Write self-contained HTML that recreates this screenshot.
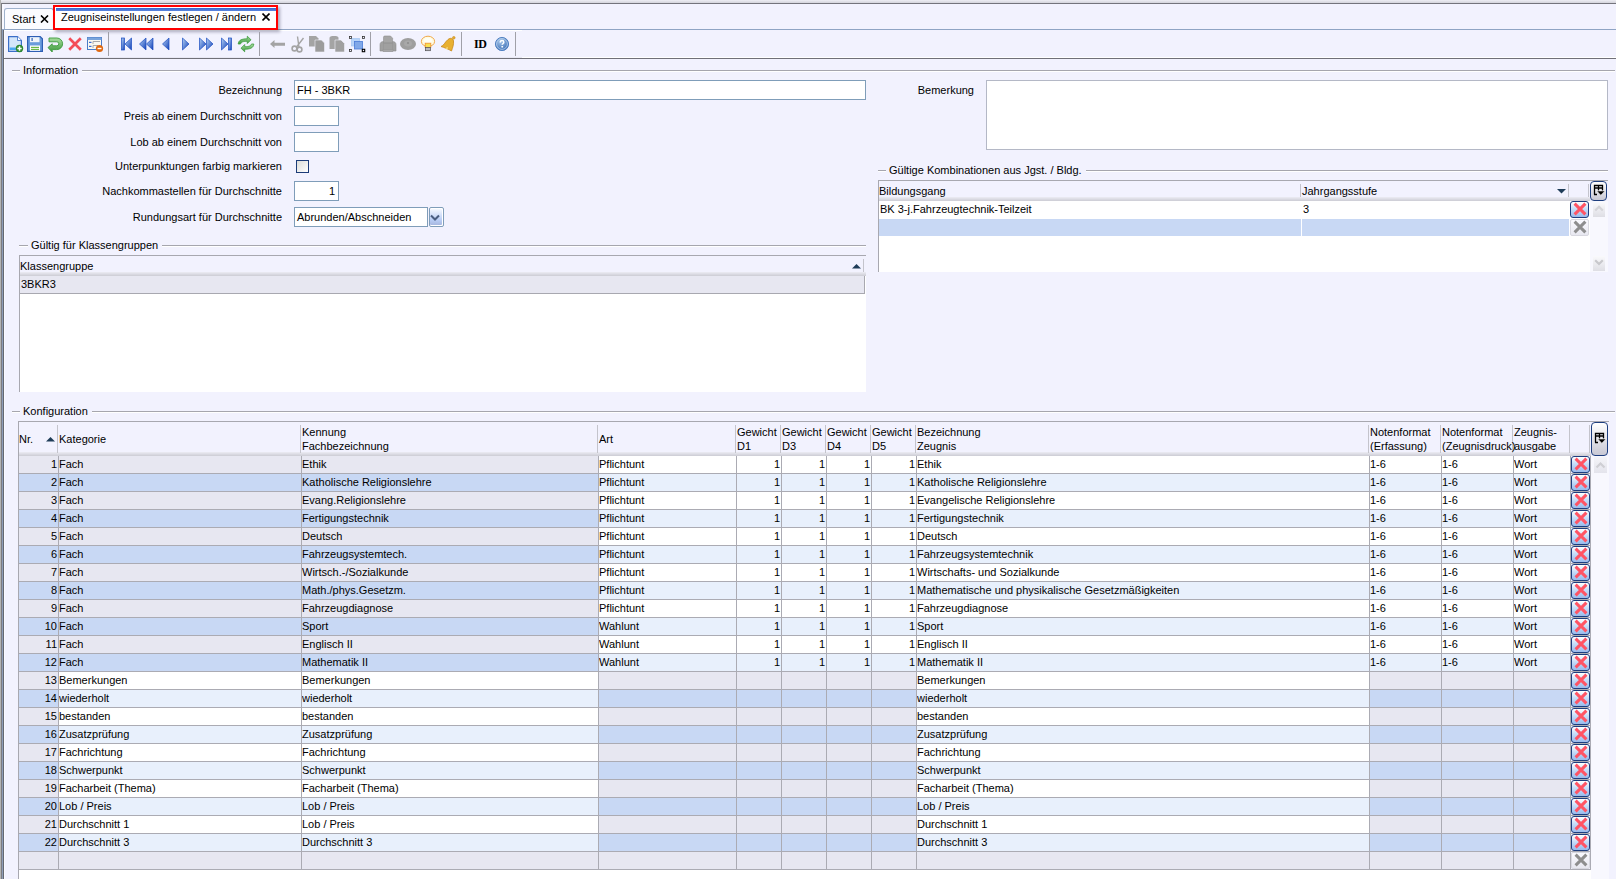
<!DOCTYPE html>
<html><head><meta charset="utf-8"><style>
html,body{margin:0;padding:0;}
body{width:1616px;height:879px;overflow:hidden;position:relative;background:#F2F2FE;font-family:"Liberation Sans", sans-serif;font-size:11px;color:#000;}
body>div{position:absolute;}
.t{white-space:pre;line-height:13px;font-size:11px;}
</style></head><body>
<div style="left:0px;top:0px;width:1616px;height:3px;background:linear-gradient(#EEEEF4,#D4D4DC)"></div><div style="left:1px;top:3px;width:1615px;height:1px;background:#74747C"></div><div style="left:0px;top:0px;width:1px;height:879px;background:#B4B4B4"></div><div style="left:1px;top:3px;width:1px;height:876px;background:#7C7C80"></div><div style="left:2px;top:30px;width:1px;height:849px;background:#8C9CB8"></div><div style="left:3px;top:30px;width:1px;height:849px;background:#646870"></div><div style="left:4px;top:30px;width:1px;height:849px;background:#FAFAFF"></div><div style="left:2px;top:4px;width:2px;height:26px;background:#F8F8FF"></div><div style="left:5px;top:30px;width:1611px;height:28px;background:#F2F2FE"></div><div style="left:5px;top:30px;width:517px;height:1px;background:#FFFFFF"></div><div style="left:522px;top:57px;width:1094px;height:1px;background:#FFFFFF"></div><div style="left:5px;top:57px;width:517px;height:1px;background:#E8E8F4"></div><div style="left:2px;top:29px;width:1614px;height:1px;background:#8FA4C4"></div><div style="left:4px;top:8px;width:50px;height:21px;background:#FBFBFF;border:1px solid #A0B2CC;border-bottom:none;border-radius:3px 3px 0 0;box-sizing:border-box"></div><div class="t" style="left:12px;top:13px;">Start</div><svg style="position:absolute;left:40px;top:15px" width="9" height="8" viewBox="0 0 9 8"><path d="M1 0.5L8 7.5M8 0.5L1 7.5" stroke="#000" stroke-width="1.6"/></svg><div style="left:53px;top:5px;width:225px;height:25px;background:transparent;box-shadow:2px 2px 3px rgba(0,0,40,0.30)"></div><div style="left:55px;top:7px;width:221px;height:21px;background:#FFFFFF"></div><div style="left:56px;top:8px;width:220px;height:3px;background:linear-gradient(#3A64C8,#5A86E0)"></div><div class="t" style="left:61px;top:11px;">Zeugniseinstellungen festlegen / ändern</div><svg style="position:absolute;left:262px;top:13px" width="8" height="8" viewBox="0 0 8 8"><path d="M0.5 0.5L7.5 7.5M7.5 0.5L0.5 7.5" stroke="#000" stroke-width="1.6"/></svg><div style="left:53px;top:5px;width:225px;height:25px;border:2px solid #FF0000;box-sizing:border-box"></div><div style="left:4px;top:58px;width:1612px;height:1px;background:#707078"></div><div style="left:108px;top:32px;width:1px;height:24px;background:#A0A0A8"></div><div style="left:259px;top:32px;width:1px;height:24px;background:#A0A0A8"></div><div style="left:370px;top:32px;width:1px;height:24px;background:#A0A0A8"></div><div style="left:461px;top:32px;width:1px;height:24px;background:#A0A0A8"></div><div style="left:515px;top:32px;width:1px;height:24px;background:#A0A0A8"></div><svg width="0" height="0" style="position:absolute"><defs>
<linearGradient id="gBlue" x1="0" y1="0" x2="0" y2="1"><stop offset="0" stop-color="#A8CCF4"/><stop offset="1" stop-color="#1E50C0"/></linearGradient>
<linearGradient id="gNav" x1="0" y1="0" x2="1" y2="1"><stop offset="0" stop-color="#B4D2F4"/><stop offset="1" stop-color="#1240B8"/></linearGradient>
<linearGradient id="gGreen" x1="0" y1="0" x2="0" y2="1"><stop offset="0" stop-color="#A8DCA0"/><stop offset="1" stop-color="#3C9A3C"/></linearGradient>
<linearGradient id="gGray" x1="0" y1="0" x2="0" y2="1"><stop offset="0" stop-color="#B4B4B4"/><stop offset="1" stop-color="#8C8C8C"/></linearGradient>
<linearGradient id="gDel" x1="0" y1="0" x2="0" y2="1"><stop offset="0" stop-color="#F4F8FF"/><stop offset="1" stop-color="#9CBCEC"/></linearGradient>
<linearGradient id="gBtn" x1="0" y1="0" x2="0" y2="1"><stop offset="0" stop-color="#FFFFFF"/><stop offset="1" stop-color="#C8C8D4"/></linearGradient>
<radialGradient id="gBulb" cx="0.5" cy="0.4" r="0.6"><stop offset="0" stop-color="#FFFFF0"/><stop offset="0.6" stop-color="#FFF0A0"/><stop offset="1" stop-color="#F0A040"/></radialGradient>
<radialGradient id="gHelp" cx="0.4" cy="0.3" r="0.7"><stop offset="0" stop-color="#A8C8EC"/><stop offset="1" stop-color="#3C6EB4"/></radialGradient>
</defs></svg><svg style="position:absolute;left:7px;top:35px" width="18" height="18" viewBox="0 0 18 18"><path d="M1.6 1.6H10.5L14.4 5.5V16.4H1.6Z" fill="#D4E6FA" stroke="#3A6EC8" stroke-width="1.2"/><path d="M10.5 1.6V5.5H14.4" fill="#fff" stroke="#3A6EC8" stroke-width="0.8"/><rect x="2.6" y="12.5" width="7" height="2.5" fill="#4AA8F0"/><circle cx="12.5" cy="13.5" r="3.7" fill="#2E8A2E"/><path d="M12.5 11.3V15.7M10.3 13.5H14.7" stroke="#fff" stroke-width="1.5"/></svg><svg style="position:absolute;left:26px;top:35px" width="18" height="18" viewBox="0 0 18 18"><path d="M1.6 1.6H14.2L16.4 3.8V16.4H1.6Z" fill="#6A9CDC" stroke="#2E5EB4" stroke-width="1.2"/><rect x="4" y="2.2" width="9.5" height="5" fill="#F0F4FA"/><rect x="5.5" y="3" width="1.2" height="3" fill="#2E5EB4"/><rect x="4" y="10.5" width="10" height="5.3" fill="#FFFFFF"/><rect x="5" y="11.8" width="8" height="1.2" fill="#6AB84A"/><rect x="5" y="13.8" width="8" height="1.2" fill="#6AB84A"/></svg><svg style="position:absolute;left:44px;top:33px" width="22" height="22" viewBox="0 0 22 22"><path d="M5 5H12.8A5.8 5.8 0 0 1 12.8 16.6H8.2V19L4 14.6L8.2 10.8V12.8H12.8A2 2 0 0 0 12.8 8.8H5Z" fill="url(#gGreen)" stroke="#3C9A3C" stroke-width="0.9"/></svg><svg style="position:absolute;left:66px;top:35px" width="18" height="18" viewBox="0 0 18 18"><path d="M4.2 4.2L13.8 13.8M13.8 4.2L4.2 13.8" stroke="#F44C58" stroke-width="2.7" stroke-linecap="square"/></svg><svg style="position:absolute;left:86px;top:36px" width="18" height="18" viewBox="0 0 18 18"><rect x="1.5" y="1.5" width="14" height="12" fill="#FAF8F0" stroke="#4A7CC8" stroke-width="1"/><rect x="1.5" y="1.5" width="14" height="2.5" fill="#7AA4DC"/><rect x="3" y="5.8" width="2.5" height="1.2" fill="#3A6AD0"/><rect x="3" y="9.8" width="2.5" height="1.2" fill="#3A6AD0"/><path d="M7 8V5.5H14" fill="none" stroke="#A8A8A8" stroke-width="1"/><path d="M7 12V9.5H12" fill="none" stroke="#A8A8A8" stroke-width="1"/><circle cx="13.5" cy="12.5" r="3.6" fill="#E06810"/><rect x="11.5" y="11.8" width="4" height="1.4" fill="#fff"/></svg><svg style="position:absolute;left:120px;top:37px" width="13" height="15" viewBox="0 0 13 15"><rect x="1.5" y="1" width="3" height="12" fill="url(#gNav)" stroke="#1A4CC0" stroke-width="0.7"/><path d="M11.5 1V13L5 7Z" fill="url(#gNav)" stroke="#1A4CC0" stroke-width="0.7"/></svg><svg style="position:absolute;left:138px;top:37px" width="17" height="15" viewBox="0 0 17 15"><path d="M8 1V13L1.5 7Z" fill="url(#gNav)" stroke="#1A4CC0" stroke-width="0.7"/><path d="M15 1V13L8.5 7Z" fill="url(#gNav)" stroke="#1A4CC0" stroke-width="0.7"/></svg><svg style="position:absolute;left:161px;top:37px" width="10" height="15" viewBox="0 0 10 15"><path d="M8 1V13L1.5 7Z" fill="url(#gNav)" stroke="#1A4CC0" stroke-width="0.7"/></svg><svg style="position:absolute;left:181px;top:37px" width="10" height="15" viewBox="0 0 10 15"><path d="M1.5 1V13L8 7Z" fill="url(#gNav)" stroke="#1A4CC0" stroke-width="0.7"/></svg><svg style="position:absolute;left:198px;top:37px" width="17" height="15" viewBox="0 0 17 15"><path d="M1.5 1V13L8 7Z" fill="url(#gNav)" stroke="#1A4CC0" stroke-width="0.7"/><path d="M8.5 1V13L15 7Z" fill="url(#gNav)" stroke="#1A4CC0" stroke-width="0.7"/></svg><svg style="position:absolute;left:220px;top:37px" width="13" height="15" viewBox="0 0 13 15"><path d="M1.5 1V13L8 7Z" fill="url(#gNav)" stroke="#1A4CC0" stroke-width="0.7"/><rect x="8.5" y="1" width="3" height="12" fill="url(#gNav)" stroke="#1A4CC0" stroke-width="0.7"/></svg><svg style="position:absolute;left:234px;top:33px" width="22" height="22" viewBox="0 0 22 22"><path d="M4.2 11C4.5 7 8 5.8 13.3 5.8V3.2L17 6.8L13.3 10.5V8.3C9 8.3 7.3 9 6.5 11Z" fill="url(#gGreen)" stroke="#3C9A3C" stroke-width="0.8"/><path d="M19.8 11C19.5 15 16 16.2 10.7 16.2V18.8L7 15.2L10.7 11.5V13.7C15 13.7 16.7 13 17.5 11Z" fill="url(#gGreen)" stroke="#3C9A3C" stroke-width="0.8"/></svg><svg style="position:absolute;left:269px;top:38px" width="17" height="12" viewBox="0 0 17 12"><path d="M1 6L5.5 2V4.8H16V7.8H5.5V10Z" fill="#A4A4A4"/></svg><svg style="position:absolute;left:290px;top:35px" width="15" height="18" viewBox="0 0 15 18"><circle cx="4.5" cy="13.5" r="2.4" fill="none" stroke="#A4A4A4" stroke-width="1.6"/><circle cx="9.5" cy="14.5" r="2.4" fill="none" stroke="#A4A4A4" stroke-width="1.6"/><path d="M6.5 12L13.5 3M9 12.5L7.5 1.5" stroke="#A4A4A4" stroke-width="1.4"/></svg><svg style="position:absolute;left:308px;top:35px" width="18" height="18" viewBox="0 0 18 18"><path d="M1 1H8L10.5 3.5V11.5H1Z" fill="#A4A4A4"/><path d="M7 5H13.5L16.5 8V17H7Z" fill="#9C9C9C" stroke="#F1F1FC" stroke-width="0.6"/></svg><svg style="position:absolute;left:328px;top:35px" width="18" height="18" viewBox="0 0 18 18"><path d="M1.5 3C1.5 1.5 3 1 6 1S10.5 1.5 10.5 3V14H1.5Z" fill="#A4A4A4"/><path d="M7 5H13L16.5 8.5V17H7Z" fill="#A0A0A0" stroke="#F1F1FC" stroke-width="0.6"/></svg><svg style="position:absolute;left:348px;top:35px" width="18" height="18" viewBox="0 0 18 18"><rect x="3.5" y="3.5" width="8" height="7.5" fill="#B8D4F8" stroke="#9CC0F0" stroke-width="0.6"/><rect x="6.5" y="6.5" width="8" height="7.5" fill="#80A8E8" stroke="#4A7CD8" stroke-width="0.8"/><rect x="1.5" y="1.5" width="2" height="2" fill="none" stroke="#333" stroke-width="0.8"/><rect x="14.5" y="1.5" width="2" height="2" fill="none" stroke="#333" stroke-width="0.8"/><rect x="1.5" y="14.5" width="2" height="2" fill="none" stroke="#333" stroke-width="0.8"/><rect x="14.3" y="14.3" width="2.4" height="2.4" fill="none" stroke="#000" stroke-width="1.1"/></svg><svg style="position:absolute;left:379px;top:35px" width="18" height="18" viewBox="0 0 18 18"><path d="M1 16V9.5C1 7.5 2.5 6.5 4.5 6.5H13.5C15.5 6.5 17 7.5 17 9.5V16Z" fill="#A0A0A0" stroke="#8E8E8E" stroke-width="0.6"/><path d="M4.5 8V2.3C4.5 1.5 5 1 5.8 1H11.5L13.6 3.2V8Z" fill="#A6A6A6" stroke="#8E8E8E" stroke-width="0.6"/><path d="M4.5 8H13.5M4.5 8V16M13.5 8V16" stroke="#949494" stroke-width="0.6"/><rect x="4" y="14.3" width="10" height="2.4" fill="#A8A8A8" stroke="#909090" stroke-width="0.5"/></svg><svg style="position:absolute;left:399px;top:37px" width="18" height="14" viewBox="0 0 18 14"><ellipse cx="9" cy="7" rx="8" ry="6" fill="#9E9E9E"/><ellipse cx="9" cy="6.5" rx="4" ry="3" fill="#A8A8A8"/><circle cx="9" cy="6" r="0.8" fill="#777"/></svg><svg style="position:absolute;left:420px;top:35px" width="16" height="18" viewBox="0 0 16 18"><ellipse cx="8" cy="6.4" rx="6.6" ry="5.2" fill="#FFFBE0" stroke="#F0A848" stroke-width="1"/><ellipse cx="8" cy="5.5" rx="4" ry="2.5" fill="#FFFFF4"/><rect x="5.2" y="8.2" width="5.6" height="4.3" fill="#F8E050" stroke="#F09030" stroke-width="0.8"/><rect x="5.5" y="12.5" width="5" height="3.2" fill="#B8B8C0" stroke="#505050" stroke-width="0.7"/></svg><svg style="position:absolute;left:439px;top:35px" width="18" height="18" viewBox="0 0 18 18"><path d="M2 11.5C4.5 11 6 7 9 4.5C11.5 2.5 14 3 14.5 6C15 9 13.5 13 12.5 16C9.5 14 5 12.5 2 11.5Z" fill="#E8B030" stroke="#C88818" stroke-width="0.8"/><circle cx="14.8" cy="2.8" r="1.3" fill="#E8B030" stroke="#C88818" stroke-width="0.6"/><path d="M6 13L9 12L8.5 15Z" fill="#F8D870"/></svg><div class="t" style="left:474px;top:36px;font:bold 12px 'Liberation Serif',serif;line-height:16px;letter-spacing:-0.3px">ID</div><svg style="position:absolute;left:494px;top:36px" width="16" height="16" viewBox="0 0 16 16"><circle cx="8" cy="8" r="6.6" fill="url(#gHelp)" stroke="#4A7CC0" stroke-width="0.9"/><circle cx="8" cy="8" r="5.4" fill="none" stroke="#C8DCF4" stroke-width="0.7"/><path d="M6.3 6.5C6.3 5.2 7 4.6 8.1 4.6S9.8 5.2 9.8 6.3C9.8 7.4 8.2 7.6 8.2 8.8" fill="none" stroke="#fff" stroke-width="1.5"/><rect x="7.4" y="10" width="1.7" height="1.5" fill="#fff"/></svg><div style="left:12px;top:70px;width:1603px;height:1px;background:#A6A6AE"></div><div style="left:12px;top:71px;width:1603px;height:1px;background:#FFFFFF"></div><div class="t" style="left:20px;top:64px;padding:0 4px 0 3px;background:#F2F2FE">Information</div><div class="t" style="left:-118px;top:84px;width:400px;text-align:right;">Bezeichnung</div><div class="t" style="left:-118px;top:110px;width:400px;text-align:right;">Preis ab einem Durchschnitt von</div><div class="t" style="left:-118px;top:136px;width:400px;text-align:right;">Lob ab einem Durchschnitt von</div><div class="t" style="left:-118px;top:160px;width:400px;text-align:right;">Unterpunktungen farbig markieren</div><div class="t" style="left:-118px;top:185px;width:400px;text-align:right;">Nachkommastellen für Durchschnitte</div><div class="t" style="left:-118px;top:211px;width:400px;text-align:right;">Rundungsart für Durchschnitte</div><div style="left:294px;top:80px;width:572px;height:20px;background:#fff;border:1px solid #7F9DB9;box-sizing:border-box"></div><div class="t" style="left:297px;top:84px;">FH - 3BKR</div><div style="left:294px;top:106px;width:45px;height:20px;background:#fff;border:1px solid #7F9DB9;box-sizing:border-box"></div><div style="left:294px;top:132px;width:45px;height:20px;background:#fff;border:1px solid #7F9DB9;box-sizing:border-box"></div><div style="left:296px;top:160px;width:13px;height:13px;border:1px solid #1C3C78;box-sizing:border-box;background:linear-gradient(135deg,#DCDCD8,#FFFFFF)"></div><div style="left:294px;top:181px;width:45px;height:20px;background:#fff;border:1px solid #7F9DB9;box-sizing:border-box"></div><div class="t" style="left:-65px;top:185px;width:400px;text-align:right;">1</div><div style="left:294px;top:207px;width:134px;height:20px;background:#fff;border:1px solid #7F9DB9;box-sizing:border-box"></div><div class="t" style="left:297px;top:211px;">Abrunden/Abschneiden</div><div style="left:429px;top:207px;width:15px;height:20px;border:1px solid #7F9DB9;border-radius:2px;box-sizing:border-box;background:#fff"></div><div style="left:430px;top:209px;width:12px;height:16px;border-radius:1px;background:linear-gradient(#F4F8FF,#B8CCF4 70%,#A8B8E0)"></div><svg style="position:absolute;left:430px;top:214px" width="10" height="8" viewBox="0 0 10 8"><path d="M1 1.5L5 5.5L9 1.5" fill="none" stroke="#4A5E80" stroke-width="2"/></svg><div class="t" style="left:574px;top:84px;width:400px;text-align:right;">Bemerkung</div><div style="left:986px;top:80px;width:622px;height:70px;background:#fff;border:1px solid #B4B8C6;box-sizing:border-box"></div><div style="left:878px;top:170px;width:730px;height:1px;background:#A6A6AE"></div><div style="left:878px;top:171px;width:730px;height:1px;background:#FFFFFF"></div><div class="t" style="left:886px;top:164px;padding:0 4px 0 3px;background:#F2F2FE">Gültige Kombinationen aus Jgst. / Bldg.</div><div style="left:878px;top:180px;width:730px;height:1px;background:#A8A8B0"></div><div style="left:878px;top:180px;width:1px;height:92px;background:#A8A8B0"></div><div style="left:879px;top:181px;width:711px;height:20px;background:#F2F2FE"></div><div style="left:879px;top:197px;width:711px;height:4px;background:linear-gradient(#ECECF4,#CCCCD4)"></div><div class="t" style="left:879px;top:185px;">Bildungsgang</div><div style="left:1300px;top:184px;width:1px;height:13px;background:#C4C4CC"></div><div class="t" style="left:1302px;top:185px;">Jahrgangsstufe</div><svg style="position:absolute;left:1557px;top:189px" width="9" height="5" viewBox="0 0 9 5"><path d="M0 0H9L4.5 4.5Z" fill="#1E3C58"/></svg><div style="left:1568px;top:184px;width:1px;height:13px;background:#C4C4CC"></div><div style="left:1588px;top:184px;width:1px;height:13px;background:#C4C4CC"></div><div style="left:879px;top:201px;width:711px;height:71px;background:#fff"></div><div style="left:879px;top:219px;width:690px;height:17px;background:#C8D8F4"></div><div style="left:1301px;top:219px;width:1px;height:17px;background:#FFFFFF"></div><div class="t" style="left:880px;top:203px;">BK 3-j.Fahrzeugtechnik-Teilzeit</div><div class="t" style="left:1303px;top:203px;">3</div><div style="left:19px;top:245px;width:847px;height:1px;background:#A6A6AE"></div><div style="left:19px;top:246px;width:847px;height:1px;background:#FFFFFF"></div><div class="t" style="left:28px;top:239px;padding:0 4px 0 3px;background:#F2F2FE">Gültig für Klassengruppen</div><div style="left:19px;top:255px;width:847px;height:1px;background:#A8A8B0"></div><div style="left:19px;top:255px;width:1px;height:137px;background:#A8A8B0"></div><div style="left:20px;top:256px;width:846px;height:16px;background:#F2F2FE"></div><div style="left:20px;top:272px;width:846px;height:4px;background:linear-gradient(#ECECF4,#CCCCD4)"></div><div class="t" style="left:20px;top:260px;">Klassengruppe</div><svg style="position:absolute;left:852px;top:264px" width="9" height="5" viewBox="0 0 9 5"><path d="M0 4.5H9L4.5 0Z" fill="#1E3C58"/></svg><div style="left:863px;top:259px;width:1px;height:13px;background:#C4C4CC"></div><div style="left:20px;top:276px;width:846px;height:116px;background:#fff"></div><div style="left:20px;top:276px;width:844px;height:17px;background:#E7E7F1"></div><div style="left:20px;top:293px;width:845px;height:1px;background:#A8A8B0"></div><div style="left:864px;top:276px;width:1px;height:18px;background:#A8A8B0"></div><div class="t" style="left:21px;top:278px;">3BKR3</div><div style="left:12px;top:411px;width:1603px;height:1px;background:#A6A6AE"></div><div style="left:12px;top:412px;width:1603px;height:1px;background:#FFFFFF"></div><div class="t" style="left:20px;top:405px;padding:0 4px 0 3px;background:#F2F2FE">Konfiguration</div><div style="left:18px;top:421px;width:1591px;height:1px;background:#A8A8B0"></div><div style="left:18px;top:421px;width:1px;height:458px;background:#A8A8B0"></div><div style="left:19px;top:422px;width:1572px;height:30px;background:#F2F2FE"></div><div style="left:19px;top:452px;width:1572px;height:4px;background:linear-gradient(#ECECF4,#CCCCD4)"></div><div style="left:57px;top:425px;width:1px;height:28px;background:#C4C4CC"></div><div style="left:300px;top:425px;width:1px;height:28px;background:#C4C4CC"></div><div style="left:597px;top:425px;width:1px;height:28px;background:#C4C4CC"></div><div style="left:735px;top:425px;width:1px;height:28px;background:#C4C4CC"></div><div style="left:780px;top:425px;width:1px;height:28px;background:#C4C4CC"></div><div style="left:825px;top:425px;width:1px;height:28px;background:#C4C4CC"></div><div style="left:870px;top:425px;width:1px;height:28px;background:#C4C4CC"></div><div style="left:915px;top:425px;width:1px;height:28px;background:#C4C4CC"></div><div style="left:1368px;top:425px;width:1px;height:28px;background:#C4C4CC"></div><div style="left:1440px;top:425px;width:1px;height:28px;background:#C4C4CC"></div><div style="left:1512px;top:425px;width:1px;height:28px;background:#C4C4CC"></div><div style="left:1569px;top:425px;width:1px;height:28px;background:#C4C4CC"></div><div style="left:1589px;top:425px;width:1px;height:28px;background:#C4C4CC"></div><div class="t" style="left:19px;top:433px;">Nr.</div><svg style="position:absolute;left:46px;top:437px" width="9" height="5" viewBox="0 0 9 5"><path d="M0 4.5H9L4.5 0Z" fill="#1E3C58"/></svg><div class="t" style="left:59px;top:433px;">Kategorie</div><div class="t" style="left:302px;top:426px;">Kennung</div><div class="t" style="left:302px;top:440px;">Fachbezeichnung</div><div class="t" style="left:599px;top:433px;">Art</div><div class="t" style="left:737px;top:426px;">Gewicht</div><div class="t" style="left:737px;top:440px;">D1</div><div class="t" style="left:782px;top:426px;">Gewicht</div><div class="t" style="left:782px;top:440px;">D3</div><div class="t" style="left:827px;top:426px;">Gewicht</div><div class="t" style="left:827px;top:440px;">D4</div><div class="t" style="left:872px;top:426px;">Gewicht</div><div class="t" style="left:872px;top:440px;">D5</div><div class="t" style="left:917px;top:426px;">Bezeichnung</div><div class="t" style="left:917px;top:440px;">Zeugnis</div><div class="t" style="left:1370px;top:426px;">Notenformat</div><div class="t" style="left:1370px;top:440px;">(Erfassung)</div><div class="t" style="left:1442px;top:426px;">Notenformat</div><div class="t" style="left:1442px;top:440px;">(Zeugnisdruck)</div><div class="t" style="left:1514px;top:426px;">Zeugnis-</div><div class="t" style="left:1514px;top:440px;">ausgabe</div><div style="left:19px;top:870px;width:1572px;height:9px;background:#fff"></div><div style="left:1591px;top:456px;width:18px;height:423px;background:#F8F8FE"></div><div style="left:19px;top:456px;width:39px;height:17px;background:#E7E7F1"></div><div style="left:59px;top:456px;width:242px;height:17px;background:#E7E7F1"></div><div style="left:302px;top:456px;width:296px;height:17px;background:#E7E7F1"></div><div style="left:599px;top:456px;width:137px;height:17px;background:#FFFFFF"></div><div style="left:737px;top:456px;width:44px;height:17px;background:#FFFFFF"></div><div style="left:782px;top:456px;width:44px;height:17px;background:#FFFFFF"></div><div style="left:827px;top:456px;width:44px;height:17px;background:#FFFFFF"></div><div style="left:872px;top:456px;width:44px;height:17px;background:#FFFFFF"></div><div style="left:917px;top:456px;width:452px;height:17px;background:#FFFFFF"></div><div style="left:1370px;top:456px;width:71px;height:17px;background:#FFFFFF"></div><div style="left:1442px;top:456px;width:71px;height:17px;background:#FFFFFF"></div><div style="left:1514px;top:456px;width:56px;height:17px;background:#FFFFFF"></div><div style="left:19px;top:473px;width:1572px;height:1px;background:#ABABB3"></div><div class="t" style="left:-343px;top:458px;width:400px;text-align:right;">1</div><div class="t" style="left:59px;top:458px;">Fach</div><div class="t" style="left:302px;top:458px;">Ethik</div><div class="t" style="left:599px;top:458px;">Pflichtunt</div><div class="t" style="left:380px;top:458px;width:400px;text-align:right;">1</div><div class="t" style="left:425px;top:458px;width:400px;text-align:right;">1</div><div class="t" style="left:470px;top:458px;width:400px;text-align:right;">1</div><div class="t" style="left:515px;top:458px;width:400px;text-align:right;">1</div><div class="t" style="left:917px;top:458px;">Ethik</div><div class="t" style="left:1370px;top:458px;">1-6</div><div class="t" style="left:1442px;top:458px;">1-6</div><div class="t" style="left:1514px;top:458px;">Wort</div><div style="left:1571px;top:456px;width:19px;height:17px;border:1px solid #1E3E7E;border-radius:3px;box-sizing:border-box;background:linear-gradient(#FFFFFF,#C8DEF8 45%,#98BAEC)"></div><svg style="position:absolute;left:1574px;top:457px" width="14" height="14" viewBox="0 0 14 14"><path d="M1.6 1.6L12.4 12.4M12.4 1.6L1.6 12.4" stroke="#FF5464" stroke-width="3"/></svg><div style="left:19px;top:474px;width:39px;height:17px;background:#C8D8F4"></div><div style="left:59px;top:474px;width:242px;height:17px;background:#C8D8F4"></div><div style="left:302px;top:474px;width:296px;height:17px;background:#C8D8F4"></div><div style="left:599px;top:474px;width:137px;height:17px;background:#E8F0FC"></div><div style="left:737px;top:474px;width:44px;height:17px;background:#E8F0FC"></div><div style="left:782px;top:474px;width:44px;height:17px;background:#E8F0FC"></div><div style="left:827px;top:474px;width:44px;height:17px;background:#E8F0FC"></div><div style="left:872px;top:474px;width:44px;height:17px;background:#E8F0FC"></div><div style="left:917px;top:474px;width:452px;height:17px;background:#E8F0FC"></div><div style="left:1370px;top:474px;width:71px;height:17px;background:#E8F0FC"></div><div style="left:1442px;top:474px;width:71px;height:17px;background:#E8F0FC"></div><div style="left:1514px;top:474px;width:56px;height:17px;background:#E8F0FC"></div><div style="left:19px;top:491px;width:1572px;height:1px;background:#ABABB3"></div><div class="t" style="left:-343px;top:476px;width:400px;text-align:right;">2</div><div class="t" style="left:59px;top:476px;">Fach</div><div class="t" style="left:302px;top:476px;">Katholische Religionslehre</div><div class="t" style="left:599px;top:476px;">Pflichtunt</div><div class="t" style="left:380px;top:476px;width:400px;text-align:right;">1</div><div class="t" style="left:425px;top:476px;width:400px;text-align:right;">1</div><div class="t" style="left:470px;top:476px;width:400px;text-align:right;">1</div><div class="t" style="left:515px;top:476px;width:400px;text-align:right;">1</div><div class="t" style="left:917px;top:476px;">Katholische Religionslehre</div><div class="t" style="left:1370px;top:476px;">1-6</div><div class="t" style="left:1442px;top:476px;">1-6</div><div class="t" style="left:1514px;top:476px;">Wort</div><div style="left:1571px;top:474px;width:19px;height:17px;border:1px solid #1E3E7E;border-radius:3px;box-sizing:border-box;background:linear-gradient(#FFFFFF,#C8DEF8 45%,#98BAEC)"></div><svg style="position:absolute;left:1574px;top:475px" width="14" height="14" viewBox="0 0 14 14"><path d="M1.6 1.6L12.4 12.4M12.4 1.6L1.6 12.4" stroke="#FF5464" stroke-width="3"/></svg><div style="left:19px;top:492px;width:39px;height:17px;background:#E7E7F1"></div><div style="left:59px;top:492px;width:242px;height:17px;background:#E7E7F1"></div><div style="left:302px;top:492px;width:296px;height:17px;background:#E7E7F1"></div><div style="left:599px;top:492px;width:137px;height:17px;background:#FFFFFF"></div><div style="left:737px;top:492px;width:44px;height:17px;background:#FFFFFF"></div><div style="left:782px;top:492px;width:44px;height:17px;background:#FFFFFF"></div><div style="left:827px;top:492px;width:44px;height:17px;background:#FFFFFF"></div><div style="left:872px;top:492px;width:44px;height:17px;background:#FFFFFF"></div><div style="left:917px;top:492px;width:452px;height:17px;background:#FFFFFF"></div><div style="left:1370px;top:492px;width:71px;height:17px;background:#FFFFFF"></div><div style="left:1442px;top:492px;width:71px;height:17px;background:#FFFFFF"></div><div style="left:1514px;top:492px;width:56px;height:17px;background:#FFFFFF"></div><div style="left:19px;top:509px;width:1572px;height:1px;background:#ABABB3"></div><div class="t" style="left:-343px;top:494px;width:400px;text-align:right;">3</div><div class="t" style="left:59px;top:494px;">Fach</div><div class="t" style="left:302px;top:494px;">Evang.Religionslehre</div><div class="t" style="left:599px;top:494px;">Pflichtunt</div><div class="t" style="left:380px;top:494px;width:400px;text-align:right;">1</div><div class="t" style="left:425px;top:494px;width:400px;text-align:right;">1</div><div class="t" style="left:470px;top:494px;width:400px;text-align:right;">1</div><div class="t" style="left:515px;top:494px;width:400px;text-align:right;">1</div><div class="t" style="left:917px;top:494px;">Evangelische Religionslehre</div><div class="t" style="left:1370px;top:494px;">1-6</div><div class="t" style="left:1442px;top:494px;">1-6</div><div class="t" style="left:1514px;top:494px;">Wort</div><div style="left:1571px;top:492px;width:19px;height:17px;border:1px solid #1E3E7E;border-radius:3px;box-sizing:border-box;background:linear-gradient(#FFFFFF,#C8DEF8 45%,#98BAEC)"></div><svg style="position:absolute;left:1574px;top:493px" width="14" height="14" viewBox="0 0 14 14"><path d="M1.6 1.6L12.4 12.4M12.4 1.6L1.6 12.4" stroke="#FF5464" stroke-width="3"/></svg><div style="left:19px;top:510px;width:39px;height:17px;background:#C8D8F4"></div><div style="left:59px;top:510px;width:242px;height:17px;background:#C8D8F4"></div><div style="left:302px;top:510px;width:296px;height:17px;background:#C8D8F4"></div><div style="left:599px;top:510px;width:137px;height:17px;background:#E8F0FC"></div><div style="left:737px;top:510px;width:44px;height:17px;background:#E8F0FC"></div><div style="left:782px;top:510px;width:44px;height:17px;background:#E8F0FC"></div><div style="left:827px;top:510px;width:44px;height:17px;background:#E8F0FC"></div><div style="left:872px;top:510px;width:44px;height:17px;background:#E8F0FC"></div><div style="left:917px;top:510px;width:452px;height:17px;background:#E8F0FC"></div><div style="left:1370px;top:510px;width:71px;height:17px;background:#E8F0FC"></div><div style="left:1442px;top:510px;width:71px;height:17px;background:#E8F0FC"></div><div style="left:1514px;top:510px;width:56px;height:17px;background:#E8F0FC"></div><div style="left:19px;top:527px;width:1572px;height:1px;background:#ABABB3"></div><div class="t" style="left:-343px;top:512px;width:400px;text-align:right;">4</div><div class="t" style="left:59px;top:512px;">Fach</div><div class="t" style="left:302px;top:512px;">Fertigungstechnik</div><div class="t" style="left:599px;top:512px;">Pflichtunt</div><div class="t" style="left:380px;top:512px;width:400px;text-align:right;">1</div><div class="t" style="left:425px;top:512px;width:400px;text-align:right;">1</div><div class="t" style="left:470px;top:512px;width:400px;text-align:right;">1</div><div class="t" style="left:515px;top:512px;width:400px;text-align:right;">1</div><div class="t" style="left:917px;top:512px;">Fertigungstechnik</div><div class="t" style="left:1370px;top:512px;">1-6</div><div class="t" style="left:1442px;top:512px;">1-6</div><div class="t" style="left:1514px;top:512px;">Wort</div><div style="left:1571px;top:510px;width:19px;height:17px;border:1px solid #1E3E7E;border-radius:3px;box-sizing:border-box;background:linear-gradient(#FFFFFF,#C8DEF8 45%,#98BAEC)"></div><svg style="position:absolute;left:1574px;top:511px" width="14" height="14" viewBox="0 0 14 14"><path d="M1.6 1.6L12.4 12.4M12.4 1.6L1.6 12.4" stroke="#FF5464" stroke-width="3"/></svg><div style="left:19px;top:528px;width:39px;height:17px;background:#E7E7F1"></div><div style="left:59px;top:528px;width:242px;height:17px;background:#E7E7F1"></div><div style="left:302px;top:528px;width:296px;height:17px;background:#E7E7F1"></div><div style="left:599px;top:528px;width:137px;height:17px;background:#FFFFFF"></div><div style="left:737px;top:528px;width:44px;height:17px;background:#FFFFFF"></div><div style="left:782px;top:528px;width:44px;height:17px;background:#FFFFFF"></div><div style="left:827px;top:528px;width:44px;height:17px;background:#FFFFFF"></div><div style="left:872px;top:528px;width:44px;height:17px;background:#FFFFFF"></div><div style="left:917px;top:528px;width:452px;height:17px;background:#FFFFFF"></div><div style="left:1370px;top:528px;width:71px;height:17px;background:#FFFFFF"></div><div style="left:1442px;top:528px;width:71px;height:17px;background:#FFFFFF"></div><div style="left:1514px;top:528px;width:56px;height:17px;background:#FFFFFF"></div><div style="left:19px;top:545px;width:1572px;height:1px;background:#ABABB3"></div><div class="t" style="left:-343px;top:530px;width:400px;text-align:right;">5</div><div class="t" style="left:59px;top:530px;">Fach</div><div class="t" style="left:302px;top:530px;">Deutsch</div><div class="t" style="left:599px;top:530px;">Pflichtunt</div><div class="t" style="left:380px;top:530px;width:400px;text-align:right;">1</div><div class="t" style="left:425px;top:530px;width:400px;text-align:right;">1</div><div class="t" style="left:470px;top:530px;width:400px;text-align:right;">1</div><div class="t" style="left:515px;top:530px;width:400px;text-align:right;">1</div><div class="t" style="left:917px;top:530px;">Deutsch</div><div class="t" style="left:1370px;top:530px;">1-6</div><div class="t" style="left:1442px;top:530px;">1-6</div><div class="t" style="left:1514px;top:530px;">Wort</div><div style="left:1571px;top:528px;width:19px;height:17px;border:1px solid #1E3E7E;border-radius:3px;box-sizing:border-box;background:linear-gradient(#FFFFFF,#C8DEF8 45%,#98BAEC)"></div><svg style="position:absolute;left:1574px;top:529px" width="14" height="14" viewBox="0 0 14 14"><path d="M1.6 1.6L12.4 12.4M12.4 1.6L1.6 12.4" stroke="#FF5464" stroke-width="3"/></svg><div style="left:19px;top:546px;width:39px;height:17px;background:#C8D8F4"></div><div style="left:59px;top:546px;width:242px;height:17px;background:#C8D8F4"></div><div style="left:302px;top:546px;width:296px;height:17px;background:#C8D8F4"></div><div style="left:599px;top:546px;width:137px;height:17px;background:#E8F0FC"></div><div style="left:737px;top:546px;width:44px;height:17px;background:#E8F0FC"></div><div style="left:782px;top:546px;width:44px;height:17px;background:#E8F0FC"></div><div style="left:827px;top:546px;width:44px;height:17px;background:#E8F0FC"></div><div style="left:872px;top:546px;width:44px;height:17px;background:#E8F0FC"></div><div style="left:917px;top:546px;width:452px;height:17px;background:#E8F0FC"></div><div style="left:1370px;top:546px;width:71px;height:17px;background:#E8F0FC"></div><div style="left:1442px;top:546px;width:71px;height:17px;background:#E8F0FC"></div><div style="left:1514px;top:546px;width:56px;height:17px;background:#E8F0FC"></div><div style="left:19px;top:563px;width:1572px;height:1px;background:#ABABB3"></div><div class="t" style="left:-343px;top:548px;width:400px;text-align:right;">6</div><div class="t" style="left:59px;top:548px;">Fach</div><div class="t" style="left:302px;top:548px;">Fahrzeugsystemtech.</div><div class="t" style="left:599px;top:548px;">Pflichtunt</div><div class="t" style="left:380px;top:548px;width:400px;text-align:right;">1</div><div class="t" style="left:425px;top:548px;width:400px;text-align:right;">1</div><div class="t" style="left:470px;top:548px;width:400px;text-align:right;">1</div><div class="t" style="left:515px;top:548px;width:400px;text-align:right;">1</div><div class="t" style="left:917px;top:548px;">Fahrzeugsystemtechnik</div><div class="t" style="left:1370px;top:548px;">1-6</div><div class="t" style="left:1442px;top:548px;">1-6</div><div class="t" style="left:1514px;top:548px;">Wort</div><div style="left:1571px;top:546px;width:19px;height:17px;border:1px solid #1E3E7E;border-radius:3px;box-sizing:border-box;background:linear-gradient(#FFFFFF,#C8DEF8 45%,#98BAEC)"></div><svg style="position:absolute;left:1574px;top:547px" width="14" height="14" viewBox="0 0 14 14"><path d="M1.6 1.6L12.4 12.4M12.4 1.6L1.6 12.4" stroke="#FF5464" stroke-width="3"/></svg><div style="left:19px;top:564px;width:39px;height:17px;background:#E7E7F1"></div><div style="left:59px;top:564px;width:242px;height:17px;background:#E7E7F1"></div><div style="left:302px;top:564px;width:296px;height:17px;background:#E7E7F1"></div><div style="left:599px;top:564px;width:137px;height:17px;background:#FFFFFF"></div><div style="left:737px;top:564px;width:44px;height:17px;background:#FFFFFF"></div><div style="left:782px;top:564px;width:44px;height:17px;background:#FFFFFF"></div><div style="left:827px;top:564px;width:44px;height:17px;background:#FFFFFF"></div><div style="left:872px;top:564px;width:44px;height:17px;background:#FFFFFF"></div><div style="left:917px;top:564px;width:452px;height:17px;background:#FFFFFF"></div><div style="left:1370px;top:564px;width:71px;height:17px;background:#FFFFFF"></div><div style="left:1442px;top:564px;width:71px;height:17px;background:#FFFFFF"></div><div style="left:1514px;top:564px;width:56px;height:17px;background:#FFFFFF"></div><div style="left:19px;top:581px;width:1572px;height:1px;background:#ABABB3"></div><div class="t" style="left:-343px;top:566px;width:400px;text-align:right;">7</div><div class="t" style="left:59px;top:566px;">Fach</div><div class="t" style="left:302px;top:566px;">Wirtsch.-/Sozialkunde</div><div class="t" style="left:599px;top:566px;">Pflichtunt</div><div class="t" style="left:380px;top:566px;width:400px;text-align:right;">1</div><div class="t" style="left:425px;top:566px;width:400px;text-align:right;">1</div><div class="t" style="left:470px;top:566px;width:400px;text-align:right;">1</div><div class="t" style="left:515px;top:566px;width:400px;text-align:right;">1</div><div class="t" style="left:917px;top:566px;">Wirtschafts- und Sozialkunde</div><div class="t" style="left:1370px;top:566px;">1-6</div><div class="t" style="left:1442px;top:566px;">1-6</div><div class="t" style="left:1514px;top:566px;">Wort</div><div style="left:1571px;top:564px;width:19px;height:17px;border:1px solid #1E3E7E;border-radius:3px;box-sizing:border-box;background:linear-gradient(#FFFFFF,#C8DEF8 45%,#98BAEC)"></div><svg style="position:absolute;left:1574px;top:565px" width="14" height="14" viewBox="0 0 14 14"><path d="M1.6 1.6L12.4 12.4M12.4 1.6L1.6 12.4" stroke="#FF5464" stroke-width="3"/></svg><div style="left:19px;top:582px;width:39px;height:17px;background:#C8D8F4"></div><div style="left:59px;top:582px;width:242px;height:17px;background:#C8D8F4"></div><div style="left:302px;top:582px;width:296px;height:17px;background:#C8D8F4"></div><div style="left:599px;top:582px;width:137px;height:17px;background:#E8F0FC"></div><div style="left:737px;top:582px;width:44px;height:17px;background:#E8F0FC"></div><div style="left:782px;top:582px;width:44px;height:17px;background:#E8F0FC"></div><div style="left:827px;top:582px;width:44px;height:17px;background:#E8F0FC"></div><div style="left:872px;top:582px;width:44px;height:17px;background:#E8F0FC"></div><div style="left:917px;top:582px;width:452px;height:17px;background:#E8F0FC"></div><div style="left:1370px;top:582px;width:71px;height:17px;background:#E8F0FC"></div><div style="left:1442px;top:582px;width:71px;height:17px;background:#E8F0FC"></div><div style="left:1514px;top:582px;width:56px;height:17px;background:#E8F0FC"></div><div style="left:19px;top:599px;width:1572px;height:1px;background:#ABABB3"></div><div class="t" style="left:-343px;top:584px;width:400px;text-align:right;">8</div><div class="t" style="left:59px;top:584px;">Fach</div><div class="t" style="left:302px;top:584px;">Math./phys.Gesetzm.</div><div class="t" style="left:599px;top:584px;">Pflichtunt</div><div class="t" style="left:380px;top:584px;width:400px;text-align:right;">1</div><div class="t" style="left:425px;top:584px;width:400px;text-align:right;">1</div><div class="t" style="left:470px;top:584px;width:400px;text-align:right;">1</div><div class="t" style="left:515px;top:584px;width:400px;text-align:right;">1</div><div class="t" style="left:917px;top:584px;">Mathematische und physikalische Gesetzmäßigkeiten</div><div class="t" style="left:1370px;top:584px;">1-6</div><div class="t" style="left:1442px;top:584px;">1-6</div><div class="t" style="left:1514px;top:584px;">Wort</div><div style="left:1571px;top:582px;width:19px;height:17px;border:1px solid #1E3E7E;border-radius:3px;box-sizing:border-box;background:linear-gradient(#FFFFFF,#C8DEF8 45%,#98BAEC)"></div><svg style="position:absolute;left:1574px;top:583px" width="14" height="14" viewBox="0 0 14 14"><path d="M1.6 1.6L12.4 12.4M12.4 1.6L1.6 12.4" stroke="#FF5464" stroke-width="3"/></svg><div style="left:19px;top:600px;width:39px;height:17px;background:#E7E7F1"></div><div style="left:59px;top:600px;width:242px;height:17px;background:#E7E7F1"></div><div style="left:302px;top:600px;width:296px;height:17px;background:#E7E7F1"></div><div style="left:599px;top:600px;width:137px;height:17px;background:#FFFFFF"></div><div style="left:737px;top:600px;width:44px;height:17px;background:#FFFFFF"></div><div style="left:782px;top:600px;width:44px;height:17px;background:#FFFFFF"></div><div style="left:827px;top:600px;width:44px;height:17px;background:#FFFFFF"></div><div style="left:872px;top:600px;width:44px;height:17px;background:#FFFFFF"></div><div style="left:917px;top:600px;width:452px;height:17px;background:#FFFFFF"></div><div style="left:1370px;top:600px;width:71px;height:17px;background:#FFFFFF"></div><div style="left:1442px;top:600px;width:71px;height:17px;background:#FFFFFF"></div><div style="left:1514px;top:600px;width:56px;height:17px;background:#FFFFFF"></div><div style="left:19px;top:617px;width:1572px;height:1px;background:#ABABB3"></div><div class="t" style="left:-343px;top:602px;width:400px;text-align:right;">9</div><div class="t" style="left:59px;top:602px;">Fach</div><div class="t" style="left:302px;top:602px;">Fahrzeugdiagnose</div><div class="t" style="left:599px;top:602px;">Pflichtunt</div><div class="t" style="left:380px;top:602px;width:400px;text-align:right;">1</div><div class="t" style="left:425px;top:602px;width:400px;text-align:right;">1</div><div class="t" style="left:470px;top:602px;width:400px;text-align:right;">1</div><div class="t" style="left:515px;top:602px;width:400px;text-align:right;">1</div><div class="t" style="left:917px;top:602px;">Fahrzeugdiagnose</div><div class="t" style="left:1370px;top:602px;">1-6</div><div class="t" style="left:1442px;top:602px;">1-6</div><div class="t" style="left:1514px;top:602px;">Wort</div><div style="left:1571px;top:600px;width:19px;height:17px;border:1px solid #1E3E7E;border-radius:3px;box-sizing:border-box;background:linear-gradient(#FFFFFF,#C8DEF8 45%,#98BAEC)"></div><svg style="position:absolute;left:1574px;top:601px" width="14" height="14" viewBox="0 0 14 14"><path d="M1.6 1.6L12.4 12.4M12.4 1.6L1.6 12.4" stroke="#FF5464" stroke-width="3"/></svg><div style="left:19px;top:618px;width:39px;height:17px;background:#C8D8F4"></div><div style="left:59px;top:618px;width:242px;height:17px;background:#C8D8F4"></div><div style="left:302px;top:618px;width:296px;height:17px;background:#C8D8F4"></div><div style="left:599px;top:618px;width:137px;height:17px;background:#E8F0FC"></div><div style="left:737px;top:618px;width:44px;height:17px;background:#E8F0FC"></div><div style="left:782px;top:618px;width:44px;height:17px;background:#E8F0FC"></div><div style="left:827px;top:618px;width:44px;height:17px;background:#E8F0FC"></div><div style="left:872px;top:618px;width:44px;height:17px;background:#E8F0FC"></div><div style="left:917px;top:618px;width:452px;height:17px;background:#E8F0FC"></div><div style="left:1370px;top:618px;width:71px;height:17px;background:#E8F0FC"></div><div style="left:1442px;top:618px;width:71px;height:17px;background:#E8F0FC"></div><div style="left:1514px;top:618px;width:56px;height:17px;background:#E8F0FC"></div><div style="left:19px;top:635px;width:1572px;height:1px;background:#ABABB3"></div><div class="t" style="left:-343px;top:620px;width:400px;text-align:right;">10</div><div class="t" style="left:59px;top:620px;">Fach</div><div class="t" style="left:302px;top:620px;">Sport</div><div class="t" style="left:599px;top:620px;">Wahlunt</div><div class="t" style="left:380px;top:620px;width:400px;text-align:right;">1</div><div class="t" style="left:425px;top:620px;width:400px;text-align:right;">1</div><div class="t" style="left:470px;top:620px;width:400px;text-align:right;">1</div><div class="t" style="left:515px;top:620px;width:400px;text-align:right;">1</div><div class="t" style="left:917px;top:620px;">Sport</div><div class="t" style="left:1370px;top:620px;">1-6</div><div class="t" style="left:1442px;top:620px;">1-6</div><div class="t" style="left:1514px;top:620px;">Wort</div><div style="left:1571px;top:618px;width:19px;height:17px;border:1px solid #1E3E7E;border-radius:3px;box-sizing:border-box;background:linear-gradient(#FFFFFF,#C8DEF8 45%,#98BAEC)"></div><svg style="position:absolute;left:1574px;top:619px" width="14" height="14" viewBox="0 0 14 14"><path d="M1.6 1.6L12.4 12.4M12.4 1.6L1.6 12.4" stroke="#FF5464" stroke-width="3"/></svg><div style="left:19px;top:636px;width:39px;height:17px;background:#E7E7F1"></div><div style="left:59px;top:636px;width:242px;height:17px;background:#E7E7F1"></div><div style="left:302px;top:636px;width:296px;height:17px;background:#E7E7F1"></div><div style="left:599px;top:636px;width:137px;height:17px;background:#FFFFFF"></div><div style="left:737px;top:636px;width:44px;height:17px;background:#FFFFFF"></div><div style="left:782px;top:636px;width:44px;height:17px;background:#FFFFFF"></div><div style="left:827px;top:636px;width:44px;height:17px;background:#FFFFFF"></div><div style="left:872px;top:636px;width:44px;height:17px;background:#FFFFFF"></div><div style="left:917px;top:636px;width:452px;height:17px;background:#FFFFFF"></div><div style="left:1370px;top:636px;width:71px;height:17px;background:#FFFFFF"></div><div style="left:1442px;top:636px;width:71px;height:17px;background:#FFFFFF"></div><div style="left:1514px;top:636px;width:56px;height:17px;background:#FFFFFF"></div><div style="left:19px;top:653px;width:1572px;height:1px;background:#ABABB3"></div><div class="t" style="left:-343px;top:638px;width:400px;text-align:right;">11</div><div class="t" style="left:59px;top:638px;">Fach</div><div class="t" style="left:302px;top:638px;">Englisch II</div><div class="t" style="left:599px;top:638px;">Wahlunt</div><div class="t" style="left:380px;top:638px;width:400px;text-align:right;">1</div><div class="t" style="left:425px;top:638px;width:400px;text-align:right;">1</div><div class="t" style="left:470px;top:638px;width:400px;text-align:right;">1</div><div class="t" style="left:515px;top:638px;width:400px;text-align:right;">1</div><div class="t" style="left:917px;top:638px;">Englisch II</div><div class="t" style="left:1370px;top:638px;">1-6</div><div class="t" style="left:1442px;top:638px;">1-6</div><div class="t" style="left:1514px;top:638px;">Wort</div><div style="left:1571px;top:636px;width:19px;height:17px;border:1px solid #1E3E7E;border-radius:3px;box-sizing:border-box;background:linear-gradient(#FFFFFF,#C8DEF8 45%,#98BAEC)"></div><svg style="position:absolute;left:1574px;top:637px" width="14" height="14" viewBox="0 0 14 14"><path d="M1.6 1.6L12.4 12.4M12.4 1.6L1.6 12.4" stroke="#FF5464" stroke-width="3"/></svg><div style="left:19px;top:654px;width:39px;height:17px;background:#C8D8F4"></div><div style="left:59px;top:654px;width:242px;height:17px;background:#C8D8F4"></div><div style="left:302px;top:654px;width:296px;height:17px;background:#C8D8F4"></div><div style="left:599px;top:654px;width:137px;height:17px;background:#E8F0FC"></div><div style="left:737px;top:654px;width:44px;height:17px;background:#E8F0FC"></div><div style="left:782px;top:654px;width:44px;height:17px;background:#E8F0FC"></div><div style="left:827px;top:654px;width:44px;height:17px;background:#E8F0FC"></div><div style="left:872px;top:654px;width:44px;height:17px;background:#E8F0FC"></div><div style="left:917px;top:654px;width:452px;height:17px;background:#E8F0FC"></div><div style="left:1370px;top:654px;width:71px;height:17px;background:#E8F0FC"></div><div style="left:1442px;top:654px;width:71px;height:17px;background:#E8F0FC"></div><div style="left:1514px;top:654px;width:56px;height:17px;background:#E8F0FC"></div><div style="left:19px;top:671px;width:1572px;height:1px;background:#ABABB3"></div><div class="t" style="left:-343px;top:656px;width:400px;text-align:right;">12</div><div class="t" style="left:59px;top:656px;">Fach</div><div class="t" style="left:302px;top:656px;">Mathematik II</div><div class="t" style="left:599px;top:656px;">Wahlunt</div><div class="t" style="left:380px;top:656px;width:400px;text-align:right;">1</div><div class="t" style="left:425px;top:656px;width:400px;text-align:right;">1</div><div class="t" style="left:470px;top:656px;width:400px;text-align:right;">1</div><div class="t" style="left:515px;top:656px;width:400px;text-align:right;">1</div><div class="t" style="left:917px;top:656px;">Mathematik II</div><div class="t" style="left:1370px;top:656px;">1-6</div><div class="t" style="left:1442px;top:656px;">1-6</div><div class="t" style="left:1514px;top:656px;">Wort</div><div style="left:1571px;top:654px;width:19px;height:17px;border:1px solid #1E3E7E;border-radius:3px;box-sizing:border-box;background:linear-gradient(#FFFFFF,#C8DEF8 45%,#98BAEC)"></div><svg style="position:absolute;left:1574px;top:655px" width="14" height="14" viewBox="0 0 14 14"><path d="M1.6 1.6L12.4 12.4M12.4 1.6L1.6 12.4" stroke="#FF5464" stroke-width="3"/></svg><div style="left:19px;top:672px;width:39px;height:17px;background:#E7E7F1"></div><div style="left:59px;top:672px;width:242px;height:17px;background:#FFFFFF"></div><div style="left:302px;top:672px;width:296px;height:17px;background:#FFFFFF"></div><div style="left:599px;top:672px;width:137px;height:17px;background:#E7E7F1"></div><div style="left:737px;top:672px;width:44px;height:17px;background:#E7E7F1"></div><div style="left:782px;top:672px;width:44px;height:17px;background:#E7E7F1"></div><div style="left:827px;top:672px;width:44px;height:17px;background:#E7E7F1"></div><div style="left:872px;top:672px;width:44px;height:17px;background:#E7E7F1"></div><div style="left:917px;top:672px;width:452px;height:17px;background:#FFFFFF"></div><div style="left:1370px;top:672px;width:71px;height:17px;background:#E7E7F1"></div><div style="left:1442px;top:672px;width:71px;height:17px;background:#E7E7F1"></div><div style="left:1514px;top:672px;width:56px;height:17px;background:#E7E7F1"></div><div style="left:19px;top:689px;width:1572px;height:1px;background:#ABABB3"></div><div class="t" style="left:-343px;top:674px;width:400px;text-align:right;">13</div><div class="t" style="left:59px;top:674px;">Bemerkungen</div><div class="t" style="left:302px;top:674px;">Bemerkungen</div><div class="t" style="left:917px;top:674px;">Bemerkungen</div><div style="left:1571px;top:672px;width:19px;height:17px;border:1px solid #1E3E7E;border-radius:3px;box-sizing:border-box;background:linear-gradient(#FFFFFF,#C8DEF8 45%,#98BAEC)"></div><svg style="position:absolute;left:1574px;top:673px" width="14" height="14" viewBox="0 0 14 14"><path d="M1.6 1.6L12.4 12.4M12.4 1.6L1.6 12.4" stroke="#FF5464" stroke-width="3"/></svg><div style="left:19px;top:690px;width:39px;height:17px;background:#C8D8F4"></div><div style="left:59px;top:690px;width:242px;height:17px;background:#E8F0FC"></div><div style="left:302px;top:690px;width:296px;height:17px;background:#E8F0FC"></div><div style="left:599px;top:690px;width:137px;height:17px;background:#C8D8F4"></div><div style="left:737px;top:690px;width:44px;height:17px;background:#C8D8F4"></div><div style="left:782px;top:690px;width:44px;height:17px;background:#C8D8F4"></div><div style="left:827px;top:690px;width:44px;height:17px;background:#C8D8F4"></div><div style="left:872px;top:690px;width:44px;height:17px;background:#C8D8F4"></div><div style="left:917px;top:690px;width:452px;height:17px;background:#E8F0FC"></div><div style="left:1370px;top:690px;width:71px;height:17px;background:#C8D8F4"></div><div style="left:1442px;top:690px;width:71px;height:17px;background:#C8D8F4"></div><div style="left:1514px;top:690px;width:56px;height:17px;background:#C8D8F4"></div><div style="left:19px;top:707px;width:1572px;height:1px;background:#ABABB3"></div><div class="t" style="left:-343px;top:692px;width:400px;text-align:right;">14</div><div class="t" style="left:59px;top:692px;">wiederholt</div><div class="t" style="left:302px;top:692px;">wiederholt</div><div class="t" style="left:917px;top:692px;">wiederholt</div><div style="left:1571px;top:690px;width:19px;height:17px;border:1px solid #1E3E7E;border-radius:3px;box-sizing:border-box;background:linear-gradient(#FFFFFF,#C8DEF8 45%,#98BAEC)"></div><svg style="position:absolute;left:1574px;top:691px" width="14" height="14" viewBox="0 0 14 14"><path d="M1.6 1.6L12.4 12.4M12.4 1.6L1.6 12.4" stroke="#FF5464" stroke-width="3"/></svg><div style="left:19px;top:708px;width:39px;height:17px;background:#E7E7F1"></div><div style="left:59px;top:708px;width:242px;height:17px;background:#FFFFFF"></div><div style="left:302px;top:708px;width:296px;height:17px;background:#FFFFFF"></div><div style="left:599px;top:708px;width:137px;height:17px;background:#E7E7F1"></div><div style="left:737px;top:708px;width:44px;height:17px;background:#E7E7F1"></div><div style="left:782px;top:708px;width:44px;height:17px;background:#E7E7F1"></div><div style="left:827px;top:708px;width:44px;height:17px;background:#E7E7F1"></div><div style="left:872px;top:708px;width:44px;height:17px;background:#E7E7F1"></div><div style="left:917px;top:708px;width:452px;height:17px;background:#FFFFFF"></div><div style="left:1370px;top:708px;width:71px;height:17px;background:#E7E7F1"></div><div style="left:1442px;top:708px;width:71px;height:17px;background:#E7E7F1"></div><div style="left:1514px;top:708px;width:56px;height:17px;background:#E7E7F1"></div><div style="left:19px;top:725px;width:1572px;height:1px;background:#ABABB3"></div><div class="t" style="left:-343px;top:710px;width:400px;text-align:right;">15</div><div class="t" style="left:59px;top:710px;">bestanden</div><div class="t" style="left:302px;top:710px;">bestanden</div><div class="t" style="left:917px;top:710px;">bestanden</div><div style="left:1571px;top:708px;width:19px;height:17px;border:1px solid #1E3E7E;border-radius:3px;box-sizing:border-box;background:linear-gradient(#FFFFFF,#C8DEF8 45%,#98BAEC)"></div><svg style="position:absolute;left:1574px;top:709px" width="14" height="14" viewBox="0 0 14 14"><path d="M1.6 1.6L12.4 12.4M12.4 1.6L1.6 12.4" stroke="#FF5464" stroke-width="3"/></svg><div style="left:19px;top:726px;width:39px;height:17px;background:#C8D8F4"></div><div style="left:59px;top:726px;width:242px;height:17px;background:#E8F0FC"></div><div style="left:302px;top:726px;width:296px;height:17px;background:#E8F0FC"></div><div style="left:599px;top:726px;width:137px;height:17px;background:#C8D8F4"></div><div style="left:737px;top:726px;width:44px;height:17px;background:#C8D8F4"></div><div style="left:782px;top:726px;width:44px;height:17px;background:#C8D8F4"></div><div style="left:827px;top:726px;width:44px;height:17px;background:#C8D8F4"></div><div style="left:872px;top:726px;width:44px;height:17px;background:#C8D8F4"></div><div style="left:917px;top:726px;width:452px;height:17px;background:#E8F0FC"></div><div style="left:1370px;top:726px;width:71px;height:17px;background:#C8D8F4"></div><div style="left:1442px;top:726px;width:71px;height:17px;background:#C8D8F4"></div><div style="left:1514px;top:726px;width:56px;height:17px;background:#C8D8F4"></div><div style="left:19px;top:743px;width:1572px;height:1px;background:#ABABB3"></div><div class="t" style="left:-343px;top:728px;width:400px;text-align:right;">16</div><div class="t" style="left:59px;top:728px;">Zusatzprüfung</div><div class="t" style="left:302px;top:728px;">Zusatzprüfung</div><div class="t" style="left:917px;top:728px;">Zusatzprüfung</div><div style="left:1571px;top:726px;width:19px;height:17px;border:1px solid #1E3E7E;border-radius:3px;box-sizing:border-box;background:linear-gradient(#FFFFFF,#C8DEF8 45%,#98BAEC)"></div><svg style="position:absolute;left:1574px;top:727px" width="14" height="14" viewBox="0 0 14 14"><path d="M1.6 1.6L12.4 12.4M12.4 1.6L1.6 12.4" stroke="#FF5464" stroke-width="3"/></svg><div style="left:19px;top:744px;width:39px;height:17px;background:#E7E7F1"></div><div style="left:59px;top:744px;width:242px;height:17px;background:#FFFFFF"></div><div style="left:302px;top:744px;width:296px;height:17px;background:#FFFFFF"></div><div style="left:599px;top:744px;width:137px;height:17px;background:#E7E7F1"></div><div style="left:737px;top:744px;width:44px;height:17px;background:#E7E7F1"></div><div style="left:782px;top:744px;width:44px;height:17px;background:#E7E7F1"></div><div style="left:827px;top:744px;width:44px;height:17px;background:#E7E7F1"></div><div style="left:872px;top:744px;width:44px;height:17px;background:#E7E7F1"></div><div style="left:917px;top:744px;width:452px;height:17px;background:#FFFFFF"></div><div style="left:1370px;top:744px;width:71px;height:17px;background:#E7E7F1"></div><div style="left:1442px;top:744px;width:71px;height:17px;background:#E7E7F1"></div><div style="left:1514px;top:744px;width:56px;height:17px;background:#E7E7F1"></div><div style="left:19px;top:761px;width:1572px;height:1px;background:#ABABB3"></div><div class="t" style="left:-343px;top:746px;width:400px;text-align:right;">17</div><div class="t" style="left:59px;top:746px;">Fachrichtung</div><div class="t" style="left:302px;top:746px;">Fachrichtung</div><div class="t" style="left:917px;top:746px;">Fachrichtung</div><div style="left:1571px;top:744px;width:19px;height:17px;border:1px solid #1E3E7E;border-radius:3px;box-sizing:border-box;background:linear-gradient(#FFFFFF,#C8DEF8 45%,#98BAEC)"></div><svg style="position:absolute;left:1574px;top:745px" width="14" height="14" viewBox="0 0 14 14"><path d="M1.6 1.6L12.4 12.4M12.4 1.6L1.6 12.4" stroke="#FF5464" stroke-width="3"/></svg><div style="left:19px;top:762px;width:39px;height:17px;background:#C8D8F4"></div><div style="left:59px;top:762px;width:242px;height:17px;background:#E8F0FC"></div><div style="left:302px;top:762px;width:296px;height:17px;background:#E8F0FC"></div><div style="left:599px;top:762px;width:137px;height:17px;background:#C8D8F4"></div><div style="left:737px;top:762px;width:44px;height:17px;background:#C8D8F4"></div><div style="left:782px;top:762px;width:44px;height:17px;background:#C8D8F4"></div><div style="left:827px;top:762px;width:44px;height:17px;background:#C8D8F4"></div><div style="left:872px;top:762px;width:44px;height:17px;background:#C8D8F4"></div><div style="left:917px;top:762px;width:452px;height:17px;background:#E8F0FC"></div><div style="left:1370px;top:762px;width:71px;height:17px;background:#C8D8F4"></div><div style="left:1442px;top:762px;width:71px;height:17px;background:#C8D8F4"></div><div style="left:1514px;top:762px;width:56px;height:17px;background:#C8D8F4"></div><div style="left:19px;top:779px;width:1572px;height:1px;background:#ABABB3"></div><div class="t" style="left:-343px;top:764px;width:400px;text-align:right;">18</div><div class="t" style="left:59px;top:764px;">Schwerpunkt</div><div class="t" style="left:302px;top:764px;">Schwerpunkt</div><div class="t" style="left:917px;top:764px;">Schwerpunkt</div><div style="left:1571px;top:762px;width:19px;height:17px;border:1px solid #1E3E7E;border-radius:3px;box-sizing:border-box;background:linear-gradient(#FFFFFF,#C8DEF8 45%,#98BAEC)"></div><svg style="position:absolute;left:1574px;top:763px" width="14" height="14" viewBox="0 0 14 14"><path d="M1.6 1.6L12.4 12.4M12.4 1.6L1.6 12.4" stroke="#FF5464" stroke-width="3"/></svg><div style="left:19px;top:780px;width:39px;height:17px;background:#E7E7F1"></div><div style="left:59px;top:780px;width:242px;height:17px;background:#FFFFFF"></div><div style="left:302px;top:780px;width:296px;height:17px;background:#FFFFFF"></div><div style="left:599px;top:780px;width:137px;height:17px;background:#E7E7F1"></div><div style="left:737px;top:780px;width:44px;height:17px;background:#E7E7F1"></div><div style="left:782px;top:780px;width:44px;height:17px;background:#E7E7F1"></div><div style="left:827px;top:780px;width:44px;height:17px;background:#E7E7F1"></div><div style="left:872px;top:780px;width:44px;height:17px;background:#E7E7F1"></div><div style="left:917px;top:780px;width:452px;height:17px;background:#FFFFFF"></div><div style="left:1370px;top:780px;width:71px;height:17px;background:#E7E7F1"></div><div style="left:1442px;top:780px;width:71px;height:17px;background:#E7E7F1"></div><div style="left:1514px;top:780px;width:56px;height:17px;background:#E7E7F1"></div><div style="left:19px;top:797px;width:1572px;height:1px;background:#ABABB3"></div><div class="t" style="left:-343px;top:782px;width:400px;text-align:right;">19</div><div class="t" style="left:59px;top:782px;">Facharbeit (Thema)</div><div class="t" style="left:302px;top:782px;">Facharbeit (Thema)</div><div class="t" style="left:917px;top:782px;">Facharbeit (Thema)</div><div style="left:1571px;top:780px;width:19px;height:17px;border:1px solid #1E3E7E;border-radius:3px;box-sizing:border-box;background:linear-gradient(#FFFFFF,#C8DEF8 45%,#98BAEC)"></div><svg style="position:absolute;left:1574px;top:781px" width="14" height="14" viewBox="0 0 14 14"><path d="M1.6 1.6L12.4 12.4M12.4 1.6L1.6 12.4" stroke="#FF5464" stroke-width="3"/></svg><div style="left:19px;top:798px;width:39px;height:17px;background:#C8D8F4"></div><div style="left:59px;top:798px;width:242px;height:17px;background:#E8F0FC"></div><div style="left:302px;top:798px;width:296px;height:17px;background:#E8F0FC"></div><div style="left:599px;top:798px;width:137px;height:17px;background:#C8D8F4"></div><div style="left:737px;top:798px;width:44px;height:17px;background:#C8D8F4"></div><div style="left:782px;top:798px;width:44px;height:17px;background:#C8D8F4"></div><div style="left:827px;top:798px;width:44px;height:17px;background:#C8D8F4"></div><div style="left:872px;top:798px;width:44px;height:17px;background:#C8D8F4"></div><div style="left:917px;top:798px;width:452px;height:17px;background:#E8F0FC"></div><div style="left:1370px;top:798px;width:71px;height:17px;background:#C8D8F4"></div><div style="left:1442px;top:798px;width:71px;height:17px;background:#C8D8F4"></div><div style="left:1514px;top:798px;width:56px;height:17px;background:#C8D8F4"></div><div style="left:19px;top:815px;width:1572px;height:1px;background:#ABABB3"></div><div class="t" style="left:-343px;top:800px;width:400px;text-align:right;">20</div><div class="t" style="left:59px;top:800px;">Lob / Preis</div><div class="t" style="left:302px;top:800px;">Lob / Preis</div><div class="t" style="left:917px;top:800px;">Lob / Preis</div><div style="left:1571px;top:798px;width:19px;height:17px;border:1px solid #1E3E7E;border-radius:3px;box-sizing:border-box;background:linear-gradient(#FFFFFF,#C8DEF8 45%,#98BAEC)"></div><svg style="position:absolute;left:1574px;top:799px" width="14" height="14" viewBox="0 0 14 14"><path d="M1.6 1.6L12.4 12.4M12.4 1.6L1.6 12.4" stroke="#FF5464" stroke-width="3"/></svg><div style="left:19px;top:816px;width:39px;height:17px;background:#E7E7F1"></div><div style="left:59px;top:816px;width:242px;height:17px;background:#FFFFFF"></div><div style="left:302px;top:816px;width:296px;height:17px;background:#FFFFFF"></div><div style="left:599px;top:816px;width:137px;height:17px;background:#E7E7F1"></div><div style="left:737px;top:816px;width:44px;height:17px;background:#E7E7F1"></div><div style="left:782px;top:816px;width:44px;height:17px;background:#E7E7F1"></div><div style="left:827px;top:816px;width:44px;height:17px;background:#E7E7F1"></div><div style="left:872px;top:816px;width:44px;height:17px;background:#E7E7F1"></div><div style="left:917px;top:816px;width:452px;height:17px;background:#FFFFFF"></div><div style="left:1370px;top:816px;width:71px;height:17px;background:#E7E7F1"></div><div style="left:1442px;top:816px;width:71px;height:17px;background:#E7E7F1"></div><div style="left:1514px;top:816px;width:56px;height:17px;background:#E7E7F1"></div><div style="left:19px;top:833px;width:1572px;height:1px;background:#ABABB3"></div><div class="t" style="left:-343px;top:818px;width:400px;text-align:right;">21</div><div class="t" style="left:59px;top:818px;">Durchschnitt 1</div><div class="t" style="left:302px;top:818px;">Lob / Preis</div><div class="t" style="left:917px;top:818px;">Durchschnitt 1</div><div style="left:1571px;top:816px;width:19px;height:17px;border:1px solid #1E3E7E;border-radius:3px;box-sizing:border-box;background:linear-gradient(#FFFFFF,#C8DEF8 45%,#98BAEC)"></div><svg style="position:absolute;left:1574px;top:817px" width="14" height="14" viewBox="0 0 14 14"><path d="M1.6 1.6L12.4 12.4M12.4 1.6L1.6 12.4" stroke="#FF5464" stroke-width="3"/></svg><div style="left:19px;top:834px;width:39px;height:17px;background:#C8D8F4"></div><div style="left:59px;top:834px;width:242px;height:17px;background:#E8F0FC"></div><div style="left:302px;top:834px;width:296px;height:17px;background:#E8F0FC"></div><div style="left:599px;top:834px;width:137px;height:17px;background:#C8D8F4"></div><div style="left:737px;top:834px;width:44px;height:17px;background:#C8D8F4"></div><div style="left:782px;top:834px;width:44px;height:17px;background:#C8D8F4"></div><div style="left:827px;top:834px;width:44px;height:17px;background:#C8D8F4"></div><div style="left:872px;top:834px;width:44px;height:17px;background:#C8D8F4"></div><div style="left:917px;top:834px;width:452px;height:17px;background:#E8F0FC"></div><div style="left:1370px;top:834px;width:71px;height:17px;background:#C8D8F4"></div><div style="left:1442px;top:834px;width:71px;height:17px;background:#C8D8F4"></div><div style="left:1514px;top:834px;width:56px;height:17px;background:#C8D8F4"></div><div style="left:19px;top:851px;width:1572px;height:1px;background:#ABABB3"></div><div class="t" style="left:-343px;top:836px;width:400px;text-align:right;">22</div><div class="t" style="left:59px;top:836px;">Durchschnitt 3</div><div class="t" style="left:302px;top:836px;">Durchschnitt 3</div><div class="t" style="left:917px;top:836px;">Durchschnitt 3</div><div style="left:1571px;top:834px;width:19px;height:17px;border:1px solid #1E3E7E;border-radius:3px;box-sizing:border-box;background:linear-gradient(#FFFFFF,#C8DEF8 45%,#98BAEC)"></div><svg style="position:absolute;left:1574px;top:835px" width="14" height="14" viewBox="0 0 14 14"><path d="M1.6 1.6L12.4 12.4M12.4 1.6L1.6 12.4" stroke="#FF5464" stroke-width="3"/></svg><div style="left:19px;top:852px;width:39px;height:17px;background:#E7E7F1"></div><div style="left:59px;top:852px;width:242px;height:17px;background:#E7E7F1"></div><div style="left:302px;top:852px;width:296px;height:17px;background:#E7E7F1"></div><div style="left:599px;top:852px;width:137px;height:17px;background:#E7E7F1"></div><div style="left:737px;top:852px;width:44px;height:17px;background:#E7E7F1"></div><div style="left:782px;top:852px;width:44px;height:17px;background:#E7E7F1"></div><div style="left:827px;top:852px;width:44px;height:17px;background:#E7E7F1"></div><div style="left:872px;top:852px;width:44px;height:17px;background:#E7E7F1"></div><div style="left:917px;top:852px;width:452px;height:17px;background:#E7E7F1"></div><div style="left:1370px;top:852px;width:71px;height:17px;background:#E7E7F1"></div><div style="left:1442px;top:852px;width:71px;height:17px;background:#E7E7F1"></div><div style="left:1514px;top:852px;width:56px;height:17px;background:#E7E7F1"></div><div style="left:19px;top:869px;width:1572px;height:1px;background:#ABABB3"></div><div style="left:1571px;top:852px;width:19px;height:17px;border:1px solid #D8D8E0;border-radius:2px;box-sizing:border-box;background:linear-gradient(#FAFAFF,#E8E8F0)"></div><svg style="position:absolute;left:1574px;top:853px" width="14" height="14" viewBox="0 0 14 14"><path d="M1.6 1.6L12.4 12.4M12.4 1.6L1.6 12.4" stroke="#8E8E8E" stroke-width="3"/></svg><div style="left:58px;top:456px;width:1px;height:414px;background:#ABABB3"></div><div style="left:301px;top:456px;width:1px;height:414px;background:#ABABB3"></div><div style="left:598px;top:456px;width:1px;height:414px;background:#ABABB3"></div><div style="left:736px;top:456px;width:1px;height:414px;background:#ABABB3"></div><div style="left:781px;top:456px;width:1px;height:414px;background:#ABABB3"></div><div style="left:826px;top:456px;width:1px;height:414px;background:#ABABB3"></div><div style="left:871px;top:456px;width:1px;height:414px;background:#ABABB3"></div><div style="left:916px;top:456px;width:1px;height:414px;background:#ABABB3"></div><div style="left:1369px;top:456px;width:1px;height:414px;background:#ABABB3"></div><div style="left:1441px;top:456px;width:1px;height:414px;background:#ABABB3"></div><div style="left:1513px;top:456px;width:1px;height:414px;background:#ABABB3"></div><div style="left:1570px;top:456px;width:1px;height:414px;background:#ABABB3"></div><div style="left:1590px;top:456px;width:1px;height:414px;background:#ABABB3"></div><div style="left:1591px;top:422px;width:17px;height:34px;border:1.5px solid #1E3E7E;border-radius:4px;box-sizing:border-box;background:linear-gradient(#FFFFFF,#C8C8D4)"></div><svg style="position:absolute;left:1594px;top:432px" width="12" height="12" viewBox="0 0 12 12"><path d="M1.5 10.5V1.5H9.5V6.5M1 1.5H10M1 4H10M5.5 1V6.5M1 10.5H4" fill="none" stroke="#000" stroke-width="1.3"/><path d="M3.8 7H11.8L7.8 11.2Z" fill="#000" stroke="#fff" stroke-width="0.5"/></svg><div style="left:1594px;top:457px;width:13px;height:16px;background:linear-gradient(#F4F4F8,#E4E4EC)"></div><svg style="position:absolute;left:1595px;top:461px" width="11" height="8" viewBox="0 0 11 8"><path d="M1.5 6.5L5.5 2.5L9.5 6.5" fill="none" stroke="#CFCFD4" stroke-width="2.2"/></svg><div style="left:1590px;top:181px;width:17px;height:20px;border:1.5px solid #1E3E7E;border-radius:4px;box-sizing:border-box;background:linear-gradient(#FFFFFF,#C8C8D4)"></div><svg style="position:absolute;left:1593px;top:184px" width="12" height="12" viewBox="0 0 12 12"><path d="M1.5 10.5V1.5H9.5V6.5M1 1.5H10M1 4H10M5.5 1V6.5M1 10.5H4" fill="none" stroke="#000" stroke-width="1.3"/><path d="M3.8 7H11.8L7.8 11.2Z" fill="#000" stroke="#fff" stroke-width="0.5"/></svg><div style="left:1570px;top:201px;width:19px;height:17px;border:1px solid #1E3E7E;border-radius:3px;box-sizing:border-box;background:linear-gradient(#FFFFFF,#C8DEF8 45%,#98BAEC)"></div><svg style="position:absolute;left:1573px;top:202px" width="14" height="14" viewBox="0 0 14 14"><path d="M1.6 1.6L12.4 12.4M12.4 1.6L1.6 12.4" stroke="#FF5464" stroke-width="3"/></svg><div style="left:1570px;top:219px;width:19px;height:17px;border:1px solid #D8D8E0;border-radius:2px;box-sizing:border-box;background:linear-gradient(#FAFAFF,#E8E8F0)"></div><svg style="position:absolute;left:1573px;top:220px" width="14" height="14" viewBox="0 0 14 14"><path d="M1.6 1.6L12.4 12.4M12.4 1.6L1.6 12.4" stroke="#8E8E8E" stroke-width="3"/></svg><div style="left:1590px;top:201px;width:18px;height:71px;background:#F8F8FE"></div><div style="left:1593px;top:202px;width:12px;height:15px;background:linear-gradient(#FAFAFC,#DEDEE4)"></div><svg style="position:absolute;left:1594px;top:205px" width="10" height="7" viewBox="0 0 10 7"><path d="M1.2 5.5L5 1.7L8.8 5.5" fill="none" stroke="#D4D4D8" stroke-width="2.2"/></svg><div style="left:1593px;top:256px;width:12px;height:15px;background:linear-gradient(#FAFAFC,#DEDEE4)"></div><svg style="position:absolute;left:1594px;top:259px" width="10" height="7" viewBox="0 0 10 7"><path d="M1.2 1.2L5 5L8.8 1.2" fill="none" stroke="#C8C8CC" stroke-width="2.2"/></svg>
</body></html>
